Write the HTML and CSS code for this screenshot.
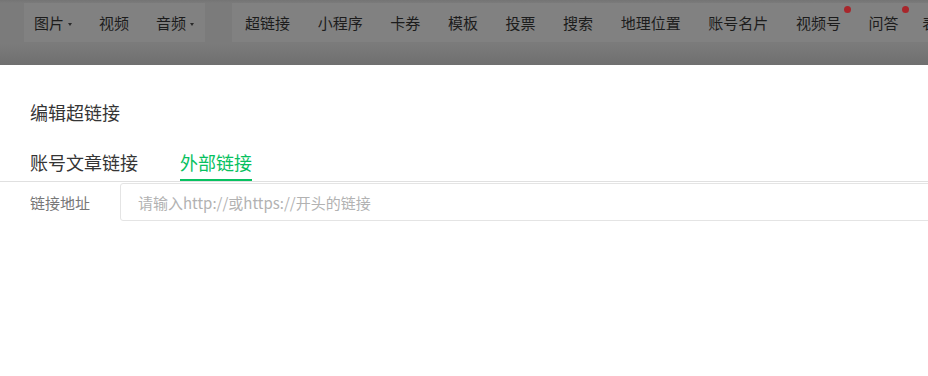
FILE: index.html
```html
<!DOCTYPE html>
<html lang="zh-CN">
<head>
  <meta charset="UTF-8" />
  <meta name="viewport" content="width=device-width, initial-scale=1.0"/>
  <title>编辑超链接</title>
  <link rel="stylesheet" href="styles.css">
</head>
<body>
  <div class="toolbar">
    <div class="group first">
      <span class="item">图片<i class="caret"></i></span>
      <span class="item">视频</span>
      <span class="item">音频<i class="caret"></i></span>
    </div>
    <div class="group">
      <span class="item">超链接</span>
      <span class="item">小程序</span>
      <span class="item">卡券</span>
      <span class="item">模板</span>
      <span class="item">投票</span>
      <span class="item">搜索</span>
      <span class="item">地理位置</span>
      <span class="item">账号名片</span>
      <span class="item">视频号<i class="dot"></i></span>
      <span class="item">问答<i class="dot"></i></span>
      <span class="item last">表情</span>
    </div>
  </div>

  <div class="dialog">
    <h3 class="dialog-title">编辑超链接</h3>

    <div class="tabs">
      <span class="tab">账号文章链接</span>
      <span class="tab active">外部链接</span>
    </div>

    <div class="form-row">
      <label for="link">链接地址</label>
      <input type="text" id="link" placeholder="请输入http://或https://开头的链接"/>
    </div>
  </div>
</body>
</html>
```

FILE: styles.css
```css
body {
  margin: 0;
  width: 928px;
  height: 376px;
  overflow: hidden;
  background: #fff;
  font-family: "Noto Sans CJK SC", "Noto Sans", sans-serif;
}

/* toolbar under the mask */
.toolbar {
  height: 65px;
  box-sizing: border-box;
  padding: 3px 0 0 24px;
  display: flex;
  gap: 27px;
  background: linear-gradient(#747474 0, #7b7b7b 3px, #7b7b7b 44px, #6f6f6f 65px);
  white-space: nowrap;
  overflow: hidden;
}
.group {
  height: 39px;
  display: flex;
  align-items: center;
  gap: 27.6px;
  padding: 0 13px;
  background: #818181;
}
.group.first {
  gap: 27px;
  padding: 0 11px 0 10px;
}
.item {
  position: relative;
  font-size: 15px;
  line-height: 20px;
  color: #1c1c1c;
}
.item.last {
  margin-left: -4px;
}
.caret {
  display: inline-block;
  margin-left: 4px;
  vertical-align: middle;
  border-left: 2px solid transparent;
  border-right: 2px solid transparent;
  border-top: 3px solid #2a2a2a;
}
.dot {
  position: absolute;
  top: -7px;
  right: -10px;
  width: 7px;
  height: 7px;
  border-radius: 50%;
  background: #a8262b;
}

/* dialog */
.dialog {
  border-top-left-radius: 4px;
  background: #fff;
}
.dialog-title {
  margin: 0;
  padding: 35px 0 0 30px;
  font-size: 18px;
  line-height: 24px;
  font-weight: normal;
  color: #353535;
}
.tabs {
  margin-top: 26px;
  padding-left: 30px;
  display: flex;
  gap: 42px;
  border-bottom: 1px solid #e0e0e0;
}
.tab {
  font-size: 18px;
  line-height: 24px;
  padding-bottom: 5px;
  border-bottom: 2px solid transparent;
  color: #353535;
}
.tab.active {
  color: #07c160;
  border-bottom-color: #07c160;
}
.form-row {
  display: flex;
  align-items: center;
  margin-top: 1px;
  padding-left: 30px;
}
.form-row label {
  width: 90px;
  flex: none;
  font-size: 15px;
  color: #777;
}
.form-row input {
  width: 860px;
  flex: none;
  height: 38px;
  box-sizing: border-box;
  padding: 0 17px;
  border: 1px solid #e4e4e4;
  border-radius: 3px;
  font-family: inherit;
  font-size: 15px;
  color: #353535;
  outline: none;
}
.form-row input::placeholder {
  color: #b2b2b2;
}
```
